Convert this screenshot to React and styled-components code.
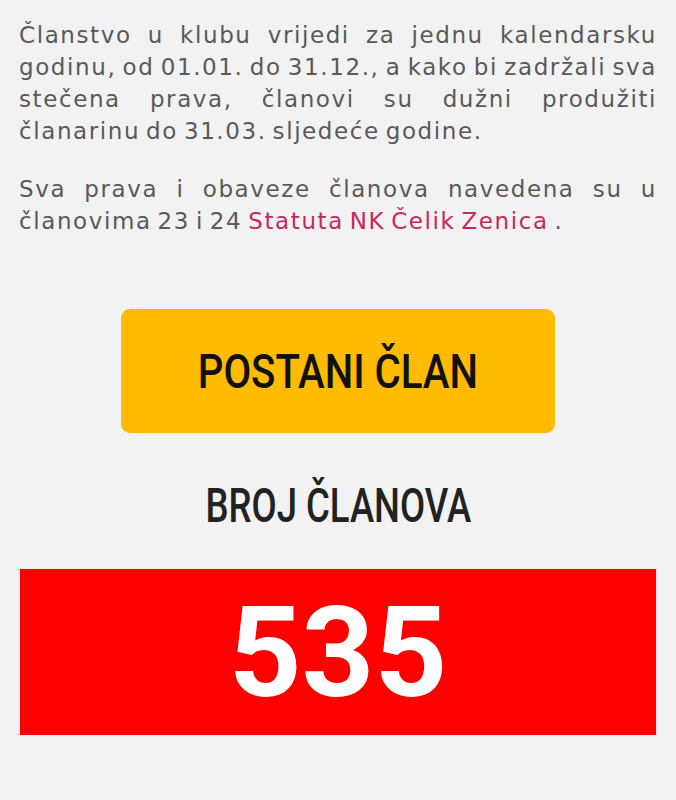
import React from 'react';
import styled, { createGlobalStyle } from 'styled-components';

const GlobalStyle = createGlobalStyle`
  html, body {
    margin: 0;
    padding: 0;
    background: #f2f2f2;
  }
`;

const Page = styled.main`
  width: 676px;
  min-height: 800px;
  background: #f2f2f2;
  box-sizing: border-box;
  padding: 19px 19px 0;
`;

const Text = styled.p`
  margin: 0 0 26px;
  font-family: "DejaVu Sans", "Open Sans", sans-serif;
  font-size: 23px;
  line-height: 32px;
  letter-spacing: 1.6px;
  word-spacing: -3px;
  color: #595959;
  text-align: justify;
`;

const Link = styled.a`
  color: #c7275e;
  text-decoration: none;
`;

const ButtonRow = styled.div`
  display: flex;
  justify-content: center;
  padding-top: 46px;
`;

const JoinButton = styled.button`
  width: 434px;
  height: 124px;
  border: none;
  border-radius: 9px;
  background: #ffbb00;
  color: #111;
  cursor: pointer;
  display: flex;
  align-items: center;
  justify-content: center;
`;

const Condensed = styled.span`
  display: inline-block;
  font-family: Roboto, "Liberation Sans", sans-serif;
  font-size: 49px;
  font-weight: 500;
  line-height: 1;
  color: ${p => p.color};
  transform: scaleX(${p => p.squeeze});
`;

const Heading = styled.h2`
  margin: 48px 0 0;
  text-align: center;
  line-height: 52px;
  font-weight: normal;
`;

const Counter = styled.div`
  margin-top: 28px;
  height: 168px;
  background: #ff0000;
  border: 1px solid #f7e9e9;
  box-sizing: border-box;
  display: flex;
  align-items: center;
  justify-content: center;
  font-family: Roboto, "Liberation Sans", sans-serif;
  font-weight: 700;
  font-size: 127px;
  color: #fff;
`;

export default function App() {
  return (
    <>
      <GlobalStyle />
      <Page>
        <Text>
          Članstvo u klubu vrijedi za jednu kalendarsku godinu, od 01.01. do 31.12., a kako bi
          zadržali sva stečena prava, članovi su dužni produžiti članarinu do 31.03. sljedeće godine.
        </Text>
        <Text>
          Sva prava i obaveze članova navedena su u članovima 23 i 24{' '}
          <Link href="#">Statuta NK Čelik Zenica</Link> .
        </Text>
        <ButtonRow>
          <JoinButton>
            <Condensed color="#111" squeeze={0.82}>POSTANI ČLAN</Condensed>
          </JoinButton>
        </ButtonRow>
        <Heading>
          <Condensed color="#222" squeeze={0.745}>BROJ ČLANOVA</Condensed>
        </Heading>
        <Counter>535</Counter>
      </Page>
    </>
  );
}
